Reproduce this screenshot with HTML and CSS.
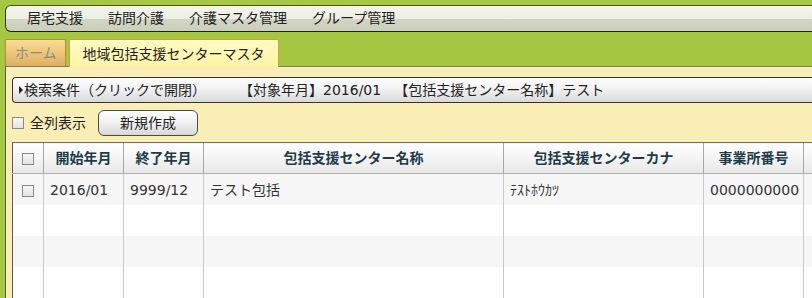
FILE: index.html
```html
<!DOCTYPE html>
<html lang="ja">
<head>
<meta charset="utf-8">
<title>地域包括支援センターマスタ</title>
<link rel="stylesheet" href="styles.css">
</head>
<body>
<div class="page">
  <nav class="menubar">
    <span class="menu-item">居宅支援</span>
    <span class="menu-item">訪問介護</span>
    <span class="menu-item">介護マスタ管理</span>
    <span class="menu-item">グループ管理</span>
  </nav>
  <div class="tabs">
    <span class="tab tab-home">ホーム</span>
    <span class="tab tab-active">地域包括支援センターマスタ</span>
  </div>
  <div class="panel">
    <div class="search-bar">
      <span class="arrow"></span>
      <span class="search-title">検索条件（クリックで開閉）</span>
      <span class="cond cond-1">【対象年月】2016/01</span>
      <span class="cond cond-2">【包括支援センター名称】テスト</span>
    </div>
    <div class="toolbar">
      <label class="check-label"><span class="cb"></span>全列表示</label>
      <span class="btn">新規作成</span>
    </div>
    <div class="grid-wrap">
      <table class="grid">
        <colgroup>
          <col class="c-cb"><col class="c-ym"><col class="c-ym"><col class="c-name"><col class="c-kana"><col class="c-no"><col class="c-more">
        </colgroup>
        <thead>
          <tr>
            <th><span class="cb"></span></th>
            <th>開始年月</th>
            <th>終了年月</th>
            <th>包括支援センター名称</th>
            <th>包括支援センターカナ</th>
            <th>事業所番号</th>
            <th></th>
          </tr>
        </thead>
        <tbody>
          <tr class="odd">
            <td class="td-cb"><span class="cb"></span></td>
            <td>2016/01</td>
            <td>9999/12</td>
            <td>テスト包括</td>
            <td class="kana">ﾃｽﾄﾎｳｶﾂ</td>
            <td>0000000000</td>
            <td></td>
          </tr>
          <tr><td></td><td></td><td></td><td></td><td></td><td></td><td></td></tr>
          <tr class="odd"><td></td><td></td><td></td><td></td><td></td><td></td><td></td></tr>
          <tr><td></td><td></td><td></td><td></td><td></td><td></td><td></td></tr>
        </tbody>
      </table>
    </div>
  </div>
</div>
</body>
</html>
```
FILE: styles.css
```css
html, body {
  margin: 0;
  padding: 0;
}
body {
  background: #a6c742;
  font-family: "DejaVu Sans", "Noto Sans CJK JP", sans-serif;
  font-size: 14px;
  color: #222;
}
.page {
  box-sizing: border-box;
  width: 812px;
  height: 298px;
  overflow: hidden;
  padding-top: 5px;
  padding-left: 5px;
}
.menubar {
  display: flex;
  gap: 25px;
  height: 25px;
  align-items: center;
  padding-left: 21px;
  border: 1px solid #2f3a12;
  border-top-color: #4b5a14;
  border-bottom-color: #1e1e1e;
  border-right: none;
  border-radius: 6px 0 0 6px;
  background: linear-gradient(#f4f5ee 0%, #eceee2 50%, #d2d5c3 52%, #cbcebb 100%);
  line-height: 1;
}
.menu-item {
  color: #222;
  white-space: nowrap;
  margin-top: -1px;
}
.tabs {
  display: flex;
  gap: 3px;
  margin-top: 7px;
  height: 28px;
  margin-bottom: -1px;
  align-items: flex-start;
}
.tab {
  box-sizing: border-box;
  display: flex;
  align-items: center;
  border: 1px solid #b88a38;
  border-bottom: none;
  border-radius: 2px 2px 0 0;
  line-height: 1;
  white-space: nowrap;
}
.tab-home {
  height: 27px;
  padding: 0 8px 0 9px;
  color: #8c8c84;
  background: linear-gradient(#f8dc92, #ddb062);
}
.tab-active {
  position: relative;
  height: 28px;
  padding: 0 13px;
  color: #222;
  border-color: #c9a14a;
  background: linear-gradient(#fffac0, #fff3a6);
}
.panel {
  background: #faeeb7;
  border-top: 1px solid #7a7a72;
  border-left: 1px solid #5a5a50;
  padding: 10px 0 0 6px;
  height: 240px;
}
.search-bar {
  box-sizing: border-box;
  display: flex;
  align-items: center;
  height: 26px;
  border: 1px solid #333;
  border-right: none;
  border-radius: 4px 0 0 4px;
  background: linear-gradient(#ffffff, #f2f2f2 45%, #d9d9d9);
  padding-left: 6px;
  white-space: nowrap;
  line-height: 1;
  overflow: hidden;
}
.arrow {
  flex: none;
  width: 0;
  height: 0;
  border-left: 4px solid #222;
  border-top: 4px solid transparent;
  border-bottom: 4px solid transparent;
  margin-right: 1px;
}
.cond-1 {
  margin-left: 33px;
}
.cond-2 {
  margin-left: 13px;
}
.toolbar {
  display: flex;
  align-items: center;
  margin-top: 7px;
  height: 26px;
}
.check-label {
  display: flex;
  align-items: center;
  gap: 6px;
  line-height: 1;
}
.cb {
  display: inline-block;
  box-sizing: border-box;
  width: 12px;
  height: 12px;
  border: 1px solid #8a8a8a;
  background: linear-gradient(#f6f6f6, #e4e4e4);
  vertical-align: middle;
}
.btn {
  box-sizing: border-box;
  margin-left: 12px;
  width: 100px;
  height: 26px;
  display: flex;
  align-items: center;
  justify-content: center;
  border: 1px solid #4a4a4a;
  border-radius: 6px;
  background: linear-gradient(#ffffff, #f0f0f0 50%, #d8d8d8);
  line-height: 1;
}
.grid-wrap {
  margin-top: 6px;
  overflow: hidden;
}
.grid {
  border-collapse: collapse;
  table-layout: fixed;
  width: 891px;
  background: #fff;
}
.c-cb { width: 31px; }
.c-ym { width: 80px; }
.c-name { width: 300px; }
.c-kana { width: 200px; }
.c-no { width: 100px; }
.c-more { width: 100px; }
.grid th {
  height: 30px;
  padding: 0;
  font-weight: bold;
  color: #1d3b4a;
  text-align: center;
  background: linear-gradient(#ffffff, #f4f4f4 50%, #e6e6e6);
  border-left: 1px solid #a8a8a8;
  border-top: 1px solid #6e6e6e;
  border-bottom: 1px solid #b0b0b0;
  line-height: 1;
}
.grid th:first-child,
.grid td:first-child {
  border-left: 1px solid #5a5a5a;
  text-align: center;
}
.grid td {
  height: 31px;
  padding: 0 0 0 6px;
  border-left: 1px solid #c8c8c8;
  color: #333;
  line-height: 1;
  white-space: nowrap;
}
.grid td:first-child {
  padding: 0;
}
.grid tr.odd td {
  background: #f6f6f6;
}
.grid td.kana {
  font-size: 14px;
}
```
